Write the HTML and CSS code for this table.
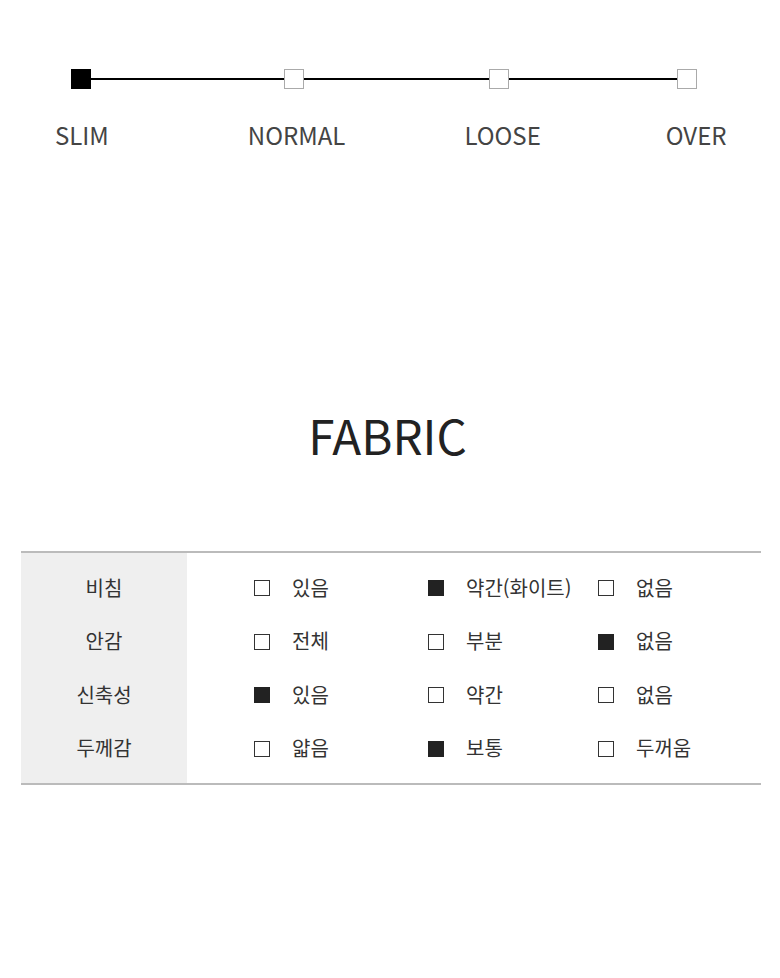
FILE: index.html
```html
<!DOCTYPE html>
<html lang="ko">
<head>
<meta charset="utf-8">
<title>Fit &amp; Fabric</title>
<link rel="stylesheet" href="styles.css">
</head>
<body>
<section class="fit">
  <div class="scale">
    <span class="dot dot-on"></span>
    <span class="bar bar-1"></span>
    <span class="dot"></span>
    <span class="bar bar-2"></span>
    <span class="dot"></span>
    <span class="bar bar-3"></span>
    <span class="dot"></span>
  </div>
  <div class="scale-labels">
    <span class="lbl lbl-slim">SLIM</span>
    <span class="lbl lbl-normal">NORMAL</span>
    <span class="lbl lbl-loose">LOOSE</span>
    <span class="lbl lbl-over">OVER</span>
  </div>
</section>

<h2 class="fabric-title">FABRIC</h2>

<div class="fabric-table">
  <div class="heads">
    <div class="head">비침</div>
    <div class="head">안감</div>
    <div class="head">신축성</div>
    <div class="head">두께감</div>
  </div>
  <div class="opts">
    <div class="opt c1"><span class="box"></span>있음</div>
    <div class="opt c2"><span class="box on"></span>약간(화이트)</div>
    <div class="opt c3"><span class="box"></span>없음</div>

    <div class="opt c1"><span class="box"></span>전체</div>
    <div class="opt c2"><span class="box"></span>부분</div>
    <div class="opt c3"><span class="box on"></span>없음</div>

    <div class="opt c1"><span class="box on"></span>있음</div>
    <div class="opt c2"><span class="box"></span>약간</div>
    <div class="opt c3"><span class="box"></span>없음</div>

    <div class="opt c1"><span class="box"></span>얇음</div>
    <div class="opt c2"><span class="box on"></span>보통</div>
    <div class="opt c3"><span class="box"></span>두꺼움</div>
  </div>
</div>
</body>
</html>
```

FILE: styles.css
```css
html, body {
  margin: 0;
  padding: 0;
  background: #fff;
}
body {
  width: 780px;
  font-family: "Noto Sans CJK KR", "Noto Sans", sans-serif;
  color: #333;
}

.fit {
  padding-top: 69px;
}
.scale {
  display: flex;
  align-items: center;
  margin-left: 71px;
  height: 20px;
}
.dot {
  box-sizing: border-box;
  width: 20px;
  height: 20px;
  border: 1px solid #aaa;
  background: #fff;
  flex: none;
}
.dot-on {
  background: #000;
  border-color: #000;
}
.bar {
  height: 2px;
  background: #000;
  flex: none;
}
.bar-1 { width: 193px; }
.bar-2 { width: 185px; }
.bar-3 { width: 168px; }

.scale-labels {
  display: flex;
  margin-top: 34px;
  font-size: 24px;
  line-height: 1;
  color: #444;
}
.lbl-slim { margin-left: 55px; }
.lbl-normal { margin-left: 139px; }
.lbl-loose { margin-left: 119px; }
.lbl-over { margin-left: 125px; }

.fabric-title {
  margin: 264px 0 0;
  padding-right: 5px;
  text-align: center;
  font-weight: 400;
  font-size: 47.5px;
  line-height: 1;
  color: #222;
}

.fabric-table {
  display: flex;
  margin: 92px 0 0 21px;
  width: 740px;
  border-top: 2px solid #bbb;
  border-bottom: 2px solid #bbb;
  font-size: 20px;
  color: #333;
}
.heads {
  width: 166px;
  flex: none;
  background: #efefef;
  padding: 8px 0;
}
.head {
  height: 53.5px;
  display: flex;
  align-items: center;
  justify-content: center;
}
.opts {
  flex: 1;
  display: grid;
  grid-template-columns: 241px 170px 1fr;
  grid-auto-rows: 53.5px;
  padding: 8px 0;
}
.opt {
  display: flex;
  align-items: center;
}
.c1 { padding-left: 67px; }
.box {
  box-sizing: border-box;
  width: 16px;
  height: 16px;
  border: 1px solid #333;
  background: #fff;
  margin: 2px 22px 0 0;
  flex: none;
}
.box.on {
  background: #222;
  border-color: #222;
}
```
